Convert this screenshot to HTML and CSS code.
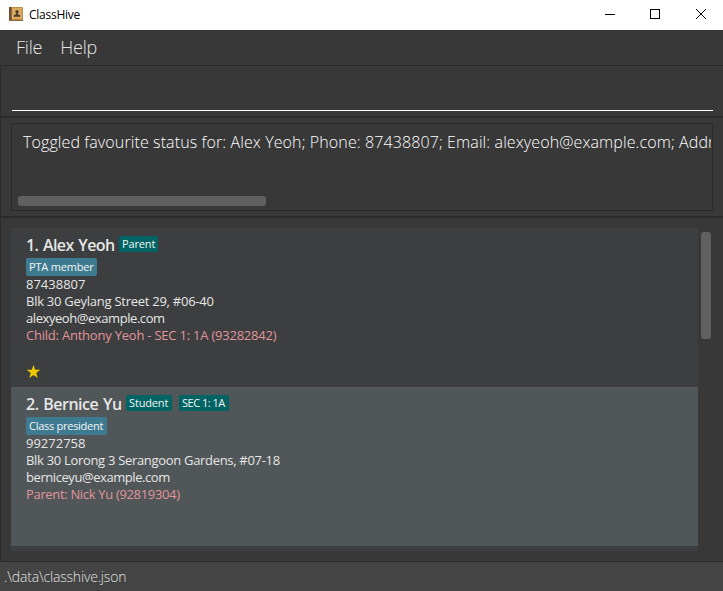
FILE: index.html
```html
<!DOCTYPE html>
<html lang="en">
<head>
<meta charset="utf-8">
<title>ClassHive</title>
<link rel="stylesheet" href="styles.css">
</head>
<body>
<header class="titlebar">
  <svg class="app-icon" width="14" height="14" viewBox="0 0 14 14">
    <rect x="0" y="0" width="14" height="14" rx="1" fill="#b98a43"/>
    <rect x="3" y="1" width="10" height="11" fill="#d9aa60"/>
    <rect x="0" y="0" width="2.5" height="14" fill="#6d4d35"/>
    <rect x="0" y="13" width="14" height="1" fill="#8b6534"/>
    <circle cx="8" cy="4.7" r="1.6" fill="#4b3b2a"/>
    <path d="M7.2 5h1.6v2.300l2.400.9v1.600H4.800V8.200l2.400-.9z" fill="#4b3b2a"/>
  </svg>
  <span class="title">ClassHive</span>
  <svg class="controls" width="104" height="12" viewBox="0 0 104 12" fill="none" stroke="#000" shape-rendering="crispEdges">
    <path d="M1 6.500h10"/>
    <rect x="46.500" y="1.500" width="9" height="9"/>
    <path d="M92 1l10 10M102 1L92 11" shape-rendering="auto"/>
  </svg>
</header>
<nav class="menu"><span class="file">File</span><span class="help">Help</span></nav>
<main class="panes">
  <section class="command"><div class="command-field"></div></section>
  <section class="result">
    <div class="result-box">
      <div class="result-text">Toggled favourite status for: Alex Yeoh; Phone: 87438807; Email: alexyeoh@example.com; Address: Blk 30 Geylang Street 29, #06-40</div>
      <div class="hthumb"></div>
    </div>
  </section>
  <section class="people">
    <div class="list">
      <article class="card">
        <div class="name-row"><span class="name name-alex">1. Alex Yeoh</span><span class="role role-parent">Parent</span></div>
        <div class="tags"><span class="tag tag-pta">PTA member</span></div>
        <div class="line">87438807</div>
        <div class="line"><span class="addr-alex">Blk 30 Geylang Street 29, #06-40</span></div>
        <div class="line"><span class="mail">alexyeoh@example.com</span></div>
        <div class="line relation"><span class="rel-alex">Child: Anthony Yeoh - SEC 1: 1A (93282842)</span></div>
        <svg class="star" width="14" height="14" viewBox="0 0 14 14"><path d="M6.500 0l1.700 4.800h5L9.200 8l1.600 5-4.300-3-4.300 3 1.600-5L-.2 4.800h5z" fill="#f0ca00"/></svg>
      </article>
      <article class="card selected">
        <div class="name-row"><span class="name name-bernice">2. Bernice Yu</span><span class="role role-student">Student</span><span class="role role-class">SEC 1: 1A</span></div>
        <div class="tags"><span class="tag tag-president">Class president</span></div>
        <div class="line">99272758</div>
        <div class="line"><span class="addr-bernice">Blk 30 Lorong 3 Serangoon Gardens, #07-18</span></div>
        <div class="line"><span class="mail">berniceyu@example.com</span></div>
        <div class="line relation"><span class="rel-bernice">Parent: Nick Yu (92819304)</span></div>
      </article>
    </div>
    <div class="vthumb"></div>
  </section>
</main>
<footer class="status"><span class="path">.\data\classhive.json</span></footer>
</body>
</html>
```
FILE: styles.css
```css
* { box-sizing: border-box; }
body {
  margin: 0;
  width: 723px;
  height: 591px;
  overflow: hidden;
  display: flex;
  flex-direction: column;
  background: #383838;
  font-family: "Open Sans", "Noto Sans", sans-serif;
  white-space: nowrap;
}
.titlebar { height: 30px; flex: none; background: #fff; display: flex; align-items: center; padding: 0 15px 2px 9px; color: #000; }
.title { margin-left: 6px; font-size: 12px; letter-spacing: -0.25px; }
.controls { margin-left: auto; }
.menu { height: 35px; flex: none; display: flex; align-items: center; padding: 0 0 2px 16px; font-size: 18px; font-weight: 300; letter-spacing: -0.2px; color: #e6e6e6; }
.help { margin-left: 18px; }
.panes { flex: 1; display: flex; flex-direction: column; border-left: 1px solid #2b2b2b; border-top: 1px solid #2b2b2b; min-height: 0; }
.command { height: 52px; flex: none; padding: 0 10px 0 11px; border-bottom: 2px solid #2b2b2b; }
.command-field { height: 45px; border-bottom: 1px solid #fff; }
.result { height: 100px; flex: none; padding: 5px 10px; border-bottom: 2px solid #2b2b2b; }
.result-box { height: 88px; border: 1px solid #2b2b2b; padding: 6px 0 0 6px; overflow: hidden; display: flex; flex-direction: column; }
.result-text { height: 24px; line-height: 24px; padding-left: 5px; margin-right: 1px; overflow: hidden; font-size: 16px; font-weight: 300; letter-spacing: 0.11px; color: #fff; }
.hthumb { width: 248px; height: 10px; margin: 42px 0 0; border-radius: 3px; background: #606060; }
.people { flex: 1; display: flex; padding: 10px 0 0 10px; min-height: 0; }
.list { width: 687px; height: 323px; background: #3c3e3f; }
.vthumb { width: 10px; height: 107px; margin: 4px 0 0 3px; border-radius: 3px; background: #606060; }
.card { height: 159px; padding: 8px 15px 0; background: #3c3e3f; color: #e6e6e6; }
.selected { background: #515658; }
.name-row { height: 22px; display: flex; align-items: flex-start; }
.name { font-size: 16px; font-weight: 600; line-height: 19px; word-spacing: 1.2px; }
.name-alex { width: 88px; letter-spacing: -0.62px; }
.name-bernice { width: 96px; letter-spacing: -0.52px; }
.role, .tag { color: #f4f4f4; font-size: 11px; padding-left: 3px; border-radius: 2px; }
.role { height: 16px; line-height: 16px; background: #006464; }
.role-parent { width: 39px; margin-left: 5px; letter-spacing: -0.15px; }
.role-student { width: 46px; margin-left: 4px; letter-spacing: -0.15px; }
.role-class { width: 50px; margin-left: 7px; letter-spacing: -0.5px; }
.tags { height: 18px; display: flex; }
.tag { height: 18px; line-height: 18px; background: #3e7b91; }
.tag-pta { width: 71px; letter-spacing: -0.2px; }
.tag-president { width: 81px; letter-spacing: -0.27px; }
.line { height: 17px; line-height: 17px; font-size: 13px; }
.addr-alex { letter-spacing: -0.26px; }
.addr-bernice { letter-spacing: -0.31px; }
.mail { letter-spacing: -0.43px; }
.rel-alex { letter-spacing: -0.22px; }
.rel-bernice { letter-spacing: -0.33px; }
.relation { color: #e0959c; }
.star { display: block; margin: 21px 0 0 1px; }
.status { height: 30px; flex: none; border-top: 1px solid #2b2b2b; background: #444; display: flex; align-items: center; padding-left: 4px; font-size: 14px; font-weight: 300; letter-spacing: -0.18px; color: #e0e0e0; }
```
